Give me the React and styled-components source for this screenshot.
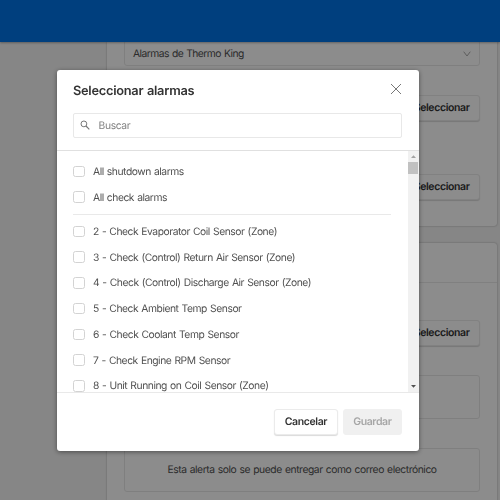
import React from 'react';
import styled, { createGlobalStyle } from 'styled-components';

const GlobalStyle = createGlobalStyle`
  * {
    box-sizing: border-box;
  }

  body {
    margin: 0;
    overflow: hidden;
    font-family: Inter, 'Liberation Sans', sans-serif;
    font-size: 10.3px;
    letter-spacing: -0.46px;
    word-spacing: 0.7px;
    color: #505050;
    text-rendering: geometricPrecision;
  }
`;

const Page = styled.div`
  height: 500px;
  overflow: hidden;
  background: #f4f4f4;
`;

const TopBar = styled.header`
  position: relative;
  height: 41.5px;
  background: #0074e6;
  box-shadow: 0 1px 2px rgba(0, 0, 0, 0.3);
`;

const Content = styled.main`
  display: flex;
  flex-direction: column;
  gap: 17px;
  width: 390px;
  margin-left: 107px;
`;

const Card = styled.section`
  height: ${({ $height }) => $height}px;
  padding: 0 17px;
  background: #fff;
  border-radius: ${({ $continued }) => ($continued ? '0 0 3px 3px' : '3px')};
  box-shadow: 0 0 2px rgba(0, 0, 0, 0.35);
`;

const CardHeader = styled.div`
  height: 40px;
  margin: 0 -17px;
  border-bottom: 1px solid #e9e9e9;
`;

const Select = styled.div`
  display: flex;
  align-items: center;
  justify-content: space-between;
  height: 26px;
  margin-top: -2px;
  padding: 2px 8px 0;
  border: 1px solid #e8e8e8;
  border-radius: 3px;
  letter-spacing: -0.54px;
`;

const FieldAction = styled.div`
  display: flex;
  justify-content: flex-end;
  margin-top: ${({ $top }) => $top}px;
`;

const Button = styled.button`
  height: 26px;
  padding: 0 9.5px;
  border: 1px solid #ebebeb;
  border-radius: 3px;
  background: #fff;
  box-shadow: 0 1px 1px rgba(0, 0, 0, 0.15);
  color: #333;
  font-family: inherit;
  font-size: 10.5px;
  font-weight: 600;
  letter-spacing: -0.38px;
  text-rendering: inherit;

  &:disabled {
    border-color: #f0f0f0;
    background: #f0f0f0;
    box-shadow: none;
    color: #a6a6a6;
  }
`;

const Box = styled.div`
  display: flex;
  align-items: center;
  justify-content: center;
  height: 44px;
  margin-top: ${({ $top }) => $top}px;
  padding-top: 1px;
  border: 1px solid #e8e8e8;
  border-radius: 3px;
  letter-spacing: -0.43px;
`;

const Overlay = styled.div`
  position: fixed;
  inset: 0;
  display: flex;
  align-items: flex-start;
  padding: 69.5px 0 0 56.5px;
  background: rgba(0, 0, 0, 0.45);
`;

const Modal = styled.div`
  display: flex;
  flex-direction: column;
  width: 362.5px;
  height: 381px;
  overflow: hidden;
  background: #fff;
  border-radius: 3px;
  box-shadow: 0 1px 5px rgba(0, 0, 0, 0.45);
`;

const ModalHeader = styled.div`
  flex: none;
  height: 81px;
  padding: 13px 17px 0 16.5px;
  border-bottom: 1px solid #e0e0e0;
`;

const TitleRow = styled.div`
  display: flex;
  align-items: center;
  justify-content: space-between;
  height: 16px;
`;

const Title = styled.h2`
  margin: 0;
  padding-top: 2px;
  color: #333;
  font-size: 12.8px;
  font-weight: 600;
  letter-spacing: -0.26px;
`;

const CloseIcon = styled.svg`
  width: 12px;
  height: 12px;
  margin-top: -3px;
  fill: none;
  stroke: #777;
`;

const Search = styled.label`
  display: flex;
  align-items: center;
  gap: 9px;
  height: 25px;
  margin-top: 14px;
  padding-left: 5.5px;
  border: 1px solid #e8e8e8;
  border-radius: 2px;
`;

const SearchInput = styled.input`
  flex: 1;
  padding: 1px 0 0;
  border: 0;
  outline: 0;
  background: none;
  color: #555;
  font: inherit;
  letter-spacing: -0.35px;
  text-rendering: inherit;

  &::placeholder {
    color: #808080;
    opacity: 1;
  }
`;

const ModalBody = styled.div`
  display: flex;
  flex: none;
  height: 241.5px;
  overflow: hidden;
`;

const List = styled.div`
  flex: 1;
  padding: 8px 17px 0 16.5px;
`;

const Divider = styled.hr`
  height: 1px;
  margin: 4px 0 3.5px;
  border: 0;
  background: #e9e9e9;
`;

const Row = styled.label`
  display: flex;
  align-items: center;
  gap: 8.5px;
  height: 25.75px;
  white-space: nowrap;
`;

const RowName = styled.span`
  padding-top: 1px;
`;

const Checkbox = styled.input`
  appearance: none;
  width: 11.5px;
  height: 11.5px;
  margin: 0;
  border: 1px solid #d3d3d3;
  border-radius: 2.5px;
  background: #fff;
`;

const Scrollbar = styled.div`
  display: flex;
  flex-direction: column;
  align-items: center;
  width: 11.5px;
  background: #f1f1f1;
`;

const Arrow = styled.svg`
  flex: none;
  width: 11px;
  height: 11px;
  fill: ${({ $color }) => $color};
`;

const Thumb = styled.div`
  flex: none;
  width: 10px;
  height: 12px;
  margin-bottom: auto;
  background: #c1c1c1;
`;

const ModalFooter = styled.div`
  display: flex;
  flex: 1;
  align-items: center;
  justify-content: flex-end;
  gap: 5px;
  padding: 0 17px 0 0;
  border-top: 1px solid #e9e9e9;
`;

const groups = ['All shutdown alarms', 'All check alarms'];

const alarms = [
  '2 - Check Evaporator Coil Sensor (Zone)',
  '3 - Check (Control) Return Air Sensor (Zone)',
  '4 - Check (Control) Discharge Air Sensor (Zone)',
  '5 - Check Ambient Temp Sensor',
  '6 - Check Coolant Temp Sensor',
  '7 - Check Engine RPM Sensor',
  '8 - Unit Running on Coil Sensor (Zone)',
];

const AlarmRow = ({ name }) => (
  <Row>
    <Checkbox type="checkbox" />
    <RowName>{name}</RowName>
  </Row>
);

const App = () => {
  return (
    <>
      <GlobalStyle />
      <Page>
        <TopBar />
        <Content>
          <Card $height={184} $continued>
            <Select>
              Alarmas de Thermo King
              <svg width="8" height="6" viewBox="0 0 8 6" fill="none" stroke="#aaa">
                <path d="M0.7 0.7 4 5 7.3 0.7" />
              </svg>
            </Select>
            <FieldAction $top={29}>
              <Button>Seleccionar</Button>
            </FieldAction>
            <FieldAction $top={53}>
              <Button>Seleccionar</Button>
            </FieldAction>
          </Card>
          <Card $height={280}>
            <CardHeader />
            <FieldAction $top={37}>
              <Button>Seleccionar</Button>
            </FieldAction>
            <Box $top={29} />
            <Box $top={29}>Esta alerta solo se puede entregar como correo electrónico</Box>
          </Card>
        </Content>
      </Page>

      <Overlay>
        <Modal role="dialog">
          <ModalHeader>
            <TitleRow>
              <Title>Seleccionar alarmas</Title>
              <CloseIcon viewBox="0 0 12 12">
                <path d="M1 1 11 11M11 1 1 11" />
              </CloseIcon>
            </TitleRow>
            <Search>
              <svg width="10" height="10" viewBox="0 0 10 10" fill="none" stroke="#777">
                <circle cx="3.9" cy="3.9" r="2.9" />
                <path d="M6 6 9.3 9.3" strokeWidth="1.2" />
              </svg>
              <SearchInput placeholder="Buscar" />
            </Search>
          </ModalHeader>
          <ModalBody>
            <List>
              {groups.map((name) => (
                <AlarmRow key={name} name={name} />
              ))}
              <Divider />
              {alarms.map((name) => (
                <AlarmRow key={name} name={name} />
              ))}
            </List>
            <Scrollbar>
              <Arrow viewBox="0 0 11 11" $color="#a3a3a3">
                <path d="M3 7 5.5 4.3 8 7z" />
              </Arrow>
              <Thumb />
              <Arrow viewBox="0 0 11 11" $color="#505050">
                <path d="M3 4 5.5 6.7 8 4z" />
              </Arrow>
            </Scrollbar>
          </ModalBody>
          <ModalFooter>
            <Button>Cancelar</Button>
            <Button disabled>Guardar</Button>
          </ModalFooter>
        </Modal>
      </Overlay>
    </>
  );
};

export default App;
